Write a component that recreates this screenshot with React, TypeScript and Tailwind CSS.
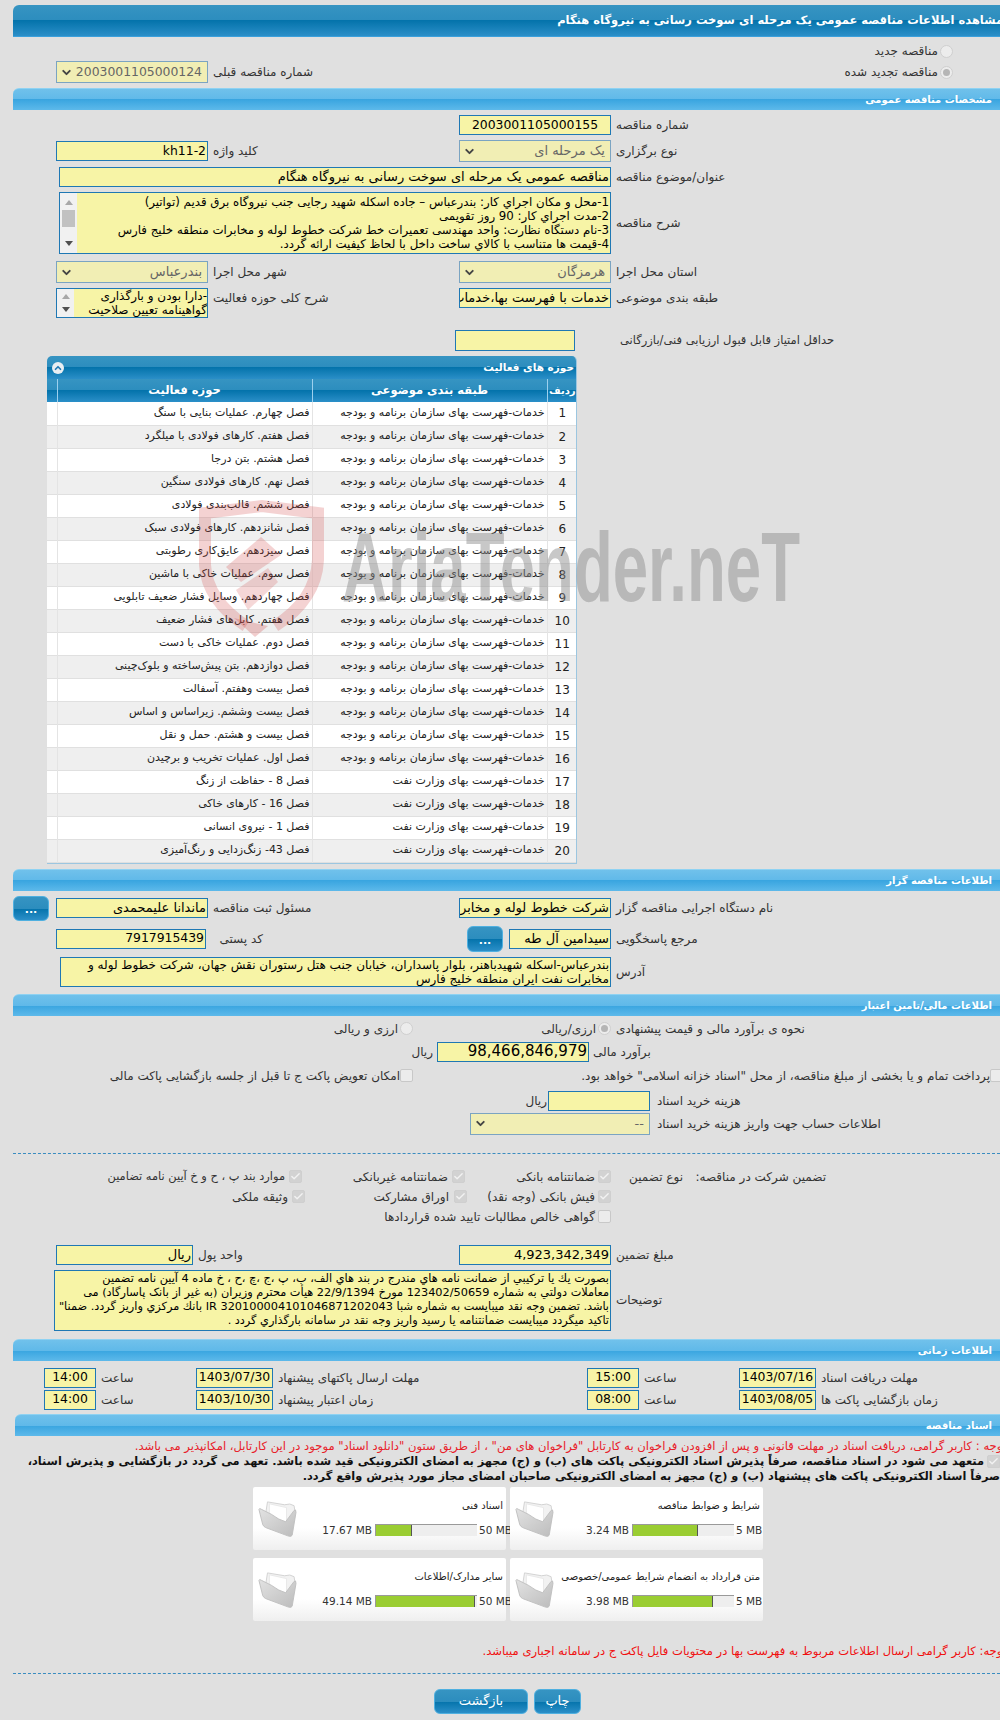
import type { ReactNode } from "react";
import { ChevronDown, ChevronUp, Check } from "lucide-react";

// Shared gradients for the blue bars
const DARK_BAR = "bg-[linear-gradient(#3694c2_0%,#2c8dbe_50%,#0473ab_50%,#2b8fc8_100%)]";
const LIGHT_BAR = "bg-[linear-gradient(#70c1eb_0%,#60b9e9_50%,#39a5e0_50%,#5db9ea_100%)]";

const CATEGORY = "خدمات-فهرست بهای سازمان برنامه و بودجه";
const CATEGORY_OIL = "خدمات-فهرست بهای وزارت نفت";

const ACTIVITIES: [string, string][] = [
  [CATEGORY, "فصل چهارم. عملیات بنایی با سنگ"],
  [CATEGORY, "فصل هفتم. کارهای فولادی با میلگرد"],
  [CATEGORY, "فصل هشتم. بتن درجا"],
  [CATEGORY, "فصل نهم. کارهای فولادی سنگین"],
  [CATEGORY, "فصل ششم. قالب‌بندی فولادی"],
  [CATEGORY, "فصل شانزدهم. کارهای فولادی سبک"],
  [CATEGORY, "فصل سیزدهم. عایق‌کاری رطوبتی"],
  [CATEGORY, "فصل سوم. عملیات خاکی با ماشین"],
  [CATEGORY, "فصل چهاردهم. وسایل فشار ضعیف تابلویی"],
  [CATEGORY, "فصل هفتم. کابل‌های فشار ضعیف"],
  [CATEGORY, "فصل دوم. عملیات خاکی با دست"],
  [CATEGORY, "فصل دوازدهم. بتن پیش‌ساخته و بلوک‌چینی"],
  [CATEGORY, "فصل بیست وهفتم. آسفالت"],
  [CATEGORY, "فصل بیست وششم. زیراساس و اساس"],
  [CATEGORY, "فصل بیست و هشتم. حمل و نقل"],
  [CATEGORY, "فصل اول. عملیات تخریب و برچیدن"],
  [CATEGORY_OIL, "فصل 8 - حفاظت از زنگ"],
  [CATEGORY_OIL, "فصل 16 - کارهای خاکی"],
  [CATEGORY_OIL, "فصل 1 - نیروی انسانی"],
  [CATEGORY_OIL, "فصل 43- زنگ‌زدایی و رنگ‌آمیزی"],
];

const DOCS = [
  [
    { title: "اسناد فنی", used: 17.67, max: 50 },
    { title: "سایر مدارک/اطلاعات", used: 49.14, max: 50 },
  ],
  [
    { title: "شرایط و ضوابط مناقصه", used: 3.24, max: 5 },
    { title: "متن قرارداد به انضمام شرایط عمومی/خصوصی", used: 3.98, max: 5 },
  ],
];

type P = { className?: string; children?: ReactNode };

// Five-column form row: margin, left field, left label, right field, right label
function Row({ className = "", children }: P) {
  return <div className={`grid grid-cols-[56px_152px_251px_152px_1fr] ${className}`}>{children}</div>;
}

function Field({ className = "", children }: P) {
  return (
    <div dir="rtl" className={`flex items-center overflow-hidden whitespace-nowrap border border-[#1f78b4] bg-[#f7f4a6] px-[1px] text-[13px] text-black ${className}`}>
      {children}
    </div>
  );
}

function Num({ children }: P) {
  return <span className="text-[12.4px]">{children}</span>;
}

function Drop({ className = "", children }: P) {
  return (
    <div dir="rtl" className={`flex items-center justify-between border border-[#7ba4c2] bg-[#f1eeb4] pl-[3px] pr-[5px] text-[13px] text-[#666] ${className}`}>
      <span>{children}</span>
      <ChevronDown size={13} strokeWidth={3.5} className="text-[#444]" />
    </div>
  );
}

function Lbl({ className = "", children }: P) {
  return (
    <div className={`flex items-center whitespace-nowrap pl-[5px] text-[12px] text-[#333] ${className}`}>
      <span dir="rtl">{children}</span>
    </div>
  );
}

function Txt({ className = "", children }: P) {
  return (
    <div dir="rtl" className={`shrink-0 whitespace-nowrap text-right text-[12px] text-[#333] ${className}`}>
      {children}
    </div>
  );
}

function Radio({ checked, className = "" }: { checked?: boolean; className?: string }) {
  return (
    <span className={`flex h-[13px] w-[13px] shrink-0 items-center justify-center rounded-full border border-[#cfcfcf] bg-[#ececec] ${className}`}>
      {checked && <span className="h-[7px] w-[7px] rounded-full bg-[#b5b5b5]" />}
    </span>
  );
}

function Box({ checked, className = "" }: { checked?: boolean; className?: string }) {
  return (
    <span className={`flex h-[13px] w-[13px] shrink-0 items-center justify-center rounded-[2px] border ${checked ? "border-[#cfcfcf] bg-[#d2d2d2]" : "border-[#c8c8c8] bg-[#ececec]"} ${className}`}>
      {checked && <Check size={11} strokeWidth={3} className="text-[#f2f2f2]" />}
    </span>
  );
}

function Section({ className = "", children }: P) {
  return (
    <div dir="rtl" className={`flex h-[22px] items-center rounded-tl-[6px] border-t border-[#8fd2f2] pr-[8px] text-[10px] font-bold text-white ${LIGHT_BAR} ${className}`}>
      {children}
    </div>
  );
}

// Scrollbar arrow of the read-only text boxes
function Tri({ up, className = "" }: { up?: boolean; className?: string }) {
  return (
    <svg viewBox="0 0 8 5" className={`h-[5px] w-[8px] ${className}`}>
      <polygon points={up ? "4,0 8,5 0,5" : "0,0 8,0 4,5"} fill={up ? "#a8a8a8" : "#505050"} />
    </svg>
  );
}

function Scroller() {
  return (
    <div className="flex w-[17px] shrink-0 flex-col items-center bg-[#f1f1f1]">
      <Tri up className="mt-[7px]" />
      <div className="mt-[5px] h-[17px] w-[13px] bg-[#c1c1c1]" />
      <Tri className="mt-[14px]" />
    </div>
  );
}

function BlueButton({ className = "", children }: P) {
  return (
    <div className={`flex items-center justify-center rounded-[6px] border border-[#4fb0e0] text-white ${DARK_BAR} ${className}`}>
      {children}
    </div>
  );
}

function Folder() {
  return (
    <svg viewBox="7 9 42 40" className="h-[38px] w-[42px] shrink-0">
      <defs>
        <linearGradient id="folderFront" x1="0" y1="0" x2="1" y2="1">
          <stop offset="0" stopColor="#e2e2e2" />
          <stop offset="1" stopColor="#bcbcbc" />
        </linearGradient>
      </defs>
      <path d="M18 11 L36 14 Q42 12 46 15 L47 22 L43 46 L15 30 Z" fill="#f2f2f2" stroke="#d2d2d2" />
      <path d="M20 13 L38 17 L38 32 L20 26 Z" fill="#ffffff" stroke="#e8e8e8" />
      <path d="M9 19 Q9 17 12 19 L22 24 Q30 30 37 32 L46 20 Q48 18 48 22 L44 46 Q43 48 40 47 L16 38 Q14 37 13 35 Z" fill="url(#folderFront)" stroke="#c0c0c0" />
    </svg>
  );
}

function DocCard({ title, used, max }: { title: string; used: number; max: number }) {
  return (
    <div className="flex h-[63px] w-[253px] rounded-[2px] bg-[linear-gradient(#ffffff_65%,#efefef_100%)]">
      <div className="ml-[3px] mt-[13px]">
        <Folder />
      </div>
      <div className="flex flex-1 flex-col pr-[3px] pt-[11px]">
        <div dir="rtl" className="h-[26px] whitespace-nowrap text-[10px] text-[#222]">{title}</div>
        <div className="flex items-center justify-end text-[10.5px] leading-[12px] text-[#333]">
          <span className="mr-[3px] whitespace-nowrap">{used} MB</span>
          <div className="h-[12px] w-[102px] border-l border-t border-[#9a9a9a] bg-[#eeeeee]">
            <div className="h-full border-r border-[#555] bg-[#9acd32]" style={{ width: `${(used / max) * 100}%` }} />
          </div>
          <span className="ml-[2px] w-[24px] whitespace-nowrap text-left">{max} MB</span>
        </div>
      </div>
    </div>
  );
}

// Site watermark lying over the page
function Watermark() {
  return (
    <svg viewBox="0 0 1000 300" className="pointer-events-none absolute left-0 top-[450px] h-[300px] w-[1000px]">
      <path d="M246 176 Q207 150 205 115 L205 63 L262 56 L318 63 L318 110 Q316 150 275 176" fill="none" stroke="#d24a4a" strokeOpacity="0.25" strokeWidth="12" />
      <polygon points="234,168 268,176 255,187" fill="#d24a4a" fillOpacity="0.28" />
      <polygon points="261,87 281,105 241,132 226,117" fill="#d24a4a" fillOpacity="0.25" />
      <polygon points="236,140 268,118 278,132 248,160" fill="#d24a4a" fillOpacity="0.22" />
      <text x="342" y="151" textLength="458" lengthAdjust="spacingAndGlyphs" fontFamily="'Liberation Sans', sans-serif" fontWeight="700" fontSize="98" fill="#8c8c8c" fillOpacity="0.48">
        AriaTender.neT
      </text>
    </svg>
  );
}

export default function App() {
  return (
    <div className="relative h-[1720px] w-[1000px] overflow-hidden bg-[#e0e0e0] font-['DejaVu_Sans','Noto_Sans',sans-serif] text-[12px]">
      {/* Page title */}
      <div dir="rtl" className={`ml-[13px] mt-[5px] flex h-[32px] items-center overflow-hidden whitespace-nowrap rounded-tl-[6px] border-b border-[#3aa0dc] text-[11.5px] font-bold text-white ${DARK_BAR}`}>
        <span className="mr-[-3px]">مشاهده اطلاعات مناقصه عمومی یک مرحله ای سوخت رسانی به نیروگاه هنگام</span>
      </div>

      {/* New / renewed */}
      <div className="flex h-[20px] items-center justify-end pr-[47px] pt-[8px]">
        <Txt className="mr-[2px]">مناقصه جدید</Txt>
        <Radio />
      </div>
      <Row className="mt-[4px] h-[22px]">
        <Drop className="col-start-2"><Num>2003001105000124</Num></Drop>
        <Lbl className="col-start-3">شماره مناقصه قبلی</Lbl>
        <div className="col-span-2 col-start-4 flex items-center justify-end pr-[47px]">
          <Txt className="mr-[2px]">مناقصه تجدید شده</Txt>
          <Radio checked />
        </div>
      </Row>

      {/* General */}
      <Section className="ml-[13px] mt-[5px]">مشخصات مناقصه عمومی</Section>
      <Row className="mt-[5px] h-[20px]">
        <Field className="col-start-4 justify-center"><Num>2003001105000155</Num></Field>
        <Lbl className="col-start-5">شماره مناقصه</Lbl>
      </Row>
      <Row className="mt-[5px] h-[22px]">
        <Field className="col-start-2 my-[1px]"><Num>kh11-2</Num></Field>
        <Lbl className="col-start-3">کلید واژه</Lbl>
        <Drop className="col-start-4">یک مرحله ای</Drop>
        <Lbl className="col-start-5">نوع برگزاری</Lbl>
      </Row>
      <div className="mt-[5px] flex h-[20px]">
        <Field className="ml-[59px] w-[552px]">مناقصه عمومی یک مرحله ای سوخت رسانی به نیروگاه هنگام</Field>
        <Lbl>عنوان/موضوع مناقصه</Lbl>
      </div>
      <div className="mt-[5px] flex h-[62px]">
        <div className="ml-[59px] flex w-[552px] overflow-hidden border border-[#1f78b4] bg-[#f7f4a6] text-[11.8px] leading-[14px] text-black">
          <Scroller />
          <div dir="rtl" className="flex-1 whitespace-nowrap pr-[1px] pt-[2px]">
            <div>1-محل و مکان اجراي کار: بندرعباس – جاده اسکله شهید رجایی جنب نیروگاه برق قدیم (تواتیر)</div>
            <div>2-مدت اجراي کار: 90 روز تقویمی</div>
            <div>3-نام دستگاه نظارت: واحد مهندسی تعمیرات خط شرکت خطوط لوله و مخابرات منطقه خلیج فارس</div>
            <div>4-قیمت ها متناسب با کالاي ساخت داخل با لحاظ کیفیت ارائه گردد.</div>
          </div>
        </div>
        <Lbl>شرح مناقصه</Lbl>
      </div>
      <Row className="mt-[7px] h-[22px]">
        <Drop className="col-start-2">بندرعباس</Drop>
        <Lbl className="col-start-3">شهر محل اجرا</Lbl>
        <Drop className="col-start-4">هرمزگان</Drop>
        <Lbl className="col-start-5">استان محل اجرا</Lbl>
      </Row>
      <Row className="mt-[5px] h-[30px]">
        <div className="col-start-2 flex overflow-hidden border border-[#1f78b4] bg-[#f7f4a6] text-[12px] leading-[14px] text-black">
          <div className="flex w-[17px] shrink-0 flex-col items-center justify-between bg-[#f1f1f1] py-[5px]">
            <Tri up />
            <Tri />
          </div>
          <div dir="rtl" className="flex-1 whitespace-nowrap">
            <div>-دارا بودن و بارگذاری</div>
            <div>گواهینامه تعیین صلاحیت</div>
          </div>
        </div>
        <Lbl className="col-start-3 h-[20px]">شرح کلی حوزه فعالیت</Lbl>
        <Field className="col-start-4 h-[20px]">خدمات با فهرست بها،خدمات با فهرست بها</Field>
        <Lbl className="col-start-5 h-[20px]">طبقه بندی موضوعی</Lbl>
      </Row>
      <div className="mt-[12px] flex h-[21px]">
        <Field className="ml-[455px] w-[120px]" />
        <Lbl className="ml-[40px]"><span className="text-[11.5px]">حداقل امتیاز قابل قبول ارزیابی فنی/بازرگانی</span></Lbl>
      </div>

      {/* Activity table */}
      <div className="ml-[47px] mt-[5px] w-[530px] overflow-hidden rounded-t-[5px] border-b border-r border-[#9cc6e0]">
        <div dir="rtl" className={`flex h-[23px] items-center justify-between pl-[5px] pr-[2px] text-[10.5px] font-bold text-white ${DARK_BAR}`}>
          <span>حوزه های فعالیت</span>
          <span className="flex h-[12px] w-[12px] items-center justify-center rounded-full bg-[#e8eef2]">
            <ChevronUp size={10} strokeWidth={4} className="text-[#1f78b4]" />
          </span>
        </div>
        <table dir="rtl" className="w-full table-fixed border-collapse">
          <colgroup>
            <col className="w-[30px]" />
            <col className="w-[235px]" />
            <col className="w-[255px]" />
            <col className="w-[10px]" />
          </colgroup>
          <thead>
            <tr className={`h-[23px] text-[11.5px] font-bold text-white ${DARK_BAR}`}>
              <th className="whitespace-nowrap border-l border-[#9cd0ee] text-[10px] font-bold">ردیف</th>
              <th className="border-l border-[#9cd0ee] font-bold">طبقه بندی موضوعی</th>
              <th className="border-l border-[#9cd0ee] font-bold">حوزه فعالیت</th>
              <th />
            </tr>
          </thead>
          <tbody>
            {ACTIVITIES.map(([category, activity], i) => (
              <tr key={i} className={`h-[23px] border-b border-[#e0e0e0] text-[11px] text-[#222] ${i % 2 ? "bg-[#efefef]" : "bg-white"}`}>
                <td className="border-l border-[#e4e4e4] text-center text-[12px]">{i + 1}</td>
                <td className="overflow-hidden whitespace-nowrap border-l border-[#e4e4e4] pr-[2px]">{category}</td>
                <td className="overflow-hidden whitespace-nowrap border-l border-[#e4e4e4] pr-[2px]">{activity}</td>
                <td />
              </tr>
            ))}
          </tbody>
        </table>
      </div>

      {/* Organizer */}
      <Section className="ml-[13px] mt-[5px]">اطلاعات مناقصه گزار</Section>
      <div className="mt-[5px] flex h-[25px] items-center">
        <BlueButton className="ml-[13px] h-[25px] w-[36px] pt-[5px] text-[11px] font-bold">...</BlueButton>
        <Field className="ml-[7px] h-[20px] w-[152px]">ماندانا علیمحمدی</Field>
        <Lbl className="w-[251px]">مسئول ثبت مناقصه</Lbl>
        <Field className="h-[20px] w-[152px]">شرکت خطوط لوله و مخابرات نفت</Field>
        <Lbl>نام دستگاه اجرایی مناقصه گزار</Lbl>
      </div>
      <div className="mt-[5px] flex h-[26px] items-center">
        <Field className="ml-[56px] h-[20px] w-[150px]"><Num>7917915439</Num></Field>
        <Txt className="w-[57px]">کد پستی</Txt>
        <BlueButton className="ml-[204px] h-[26px] w-[36px] pt-[5px] text-[11px] font-bold">...</BlueButton>
        <Field className="ml-[6px] h-[20px] w-[102px]">سیدامین آل طه</Field>
        <Lbl>مرجع پاسخگویی</Lbl>
      </div>
      <div className="mt-[5px] flex h-[30px]">
        <div dir="rtl" className="ml-[60px] w-[551px] overflow-hidden whitespace-nowrap border border-[#1f78b4] bg-[#f7f4a6] px-[1px] text-[12px] leading-[14px] text-black">
          <div>بندرعباس-اسکله شهیدباهنر، بلوار پاسداران، خیابان جنب هتل رستوران نقش جهان، شرکت خطوط لوله و</div>
          <div>مخابرات نفت ایران منطقه خلیج فارس</div>
        </div>
        <Lbl>آدرس</Lbl>
      </div>

      {/* Financial */}
      <Section className="ml-[13px] mt-[7px]">اطلاعات مالی/تامین اعتبار</Section>
      <div className="mt-[5px] flex h-[16px] items-center">
        <Txt className="w-[398px]">ارزی و ریالی</Txt>
        <Radio className="ml-[2px]" />
        <Txt className="w-[183px]">ارزی/ریالی</Txt>
        <Radio checked className="ml-[2px]" />
        <Lbl>نحوه ی برآورد مالی و قیمت پیشنهادی</Lbl>
      </div>
      <div className="mt-[5px] flex h-[20px] items-center">
        <Txt className="w-[433px]">ریال</Txt>
        <Field className="ml-[4px] h-[20px] w-[152px]"><span className="text-[15px]">98,466,846,979</span></Field>
        <Lbl className="ml-[-1px]">برآورد مالی</Lbl>
      </div>
      <div className="mt-[6px] flex h-[16px] items-center">
        <Txt className="w-[400px]">امکان تعویض پاکت ج تا قبل از جلسه بازگشایی پاکت مالی</Txt>
        <Box />
        <Txt className="w-[577px]">پرداخت تمام و یا بخشی از مبلغ مناقصه، از محل "اسناد خزانه اسلامی" خواهد بود.</Txt>
        <Box className="rounded-r-none" />
      </div>
      <div className="mt-[7px] flex h-[20px] items-center">
        <Txt className="w-[547px]">ریال</Txt>
        <Field className="ml-[1px] h-[20px] w-[102px]" />
        <Lbl className="ml-[2px]">هزینه خرید اسناد</Lbl>
      </div>
      <div className="mt-[2px] flex h-[22px]">
        <Drop className="ml-[470px] w-[180px]">--</Drop>
        <Lbl className="ml-[2px]">اطلاعات حساب جهت واریز هزینه خرید اسناد</Lbl>
      </div>
      <div className="ml-[13px] mt-[18px] border-t border-dashed border-[#3a8cc0]" />

      {/* Guarantee */}
      <div className="mt-[15px] flex h-[16px] items-center">
        <Txt className="w-[285px]"><span className="text-[11.4px]">موارد بند پ ، ح و خ آیین نامه تضامین</span></Txt>
        <Box checked className="ml-[4px]" />
        <Txt className="w-[146px]">ضمانتنامه غیربانکی</Txt>
        <Box checked className="ml-[4px]" />
        <Txt className="w-[130px]">ضمانتنامه بانکی</Txt>
        <Box checked className="ml-[3px]" />
        <Txt className="ml-[20px] w-[52px]">نوع تضمین</Txt>
        <Txt className="ml-[17px] w-[126px]">تضمین شرکت در مناقصه:</Txt>
      </div>
      <div className="mt-[4px] flex h-[16px] items-center">
        <Txt className="w-[288px]">وثیقه ملکی</Txt>
        <Box checked className="ml-[4px]" />
        <Txt className="w-[144px]">اوراق مشارکت</Txt>
        <Box checked className="ml-[5px]" />
        <Txt className="w-[128px]">فیش بانکی (وجه نقد)</Txt>
        <Box checked className="ml-[3px]" />
      </div>
      <div className="mt-[4px] flex h-[16px] items-center">
        <Txt className="w-[595px]">گواهی خالص مطالبات تایید شده قراردادها</Txt>
        <Box className="ml-[3px]" />
      </div>
      <div className="mt-[20px] flex h-[20px]">
        <Field className="ml-[56px] w-[137px]">ریال</Field>
        <Lbl className="w-[266px]">واحد پول</Lbl>
        <Field className="w-[152px]">4,923,342,349</Field>
        <Lbl>مبلغ تضمین</Lbl>
      </div>
      <div className="mt-[5px] flex h-[61px]">
        <div dir="rtl" className="ml-[54px] w-[557px] overflow-hidden whitespace-nowrap border border-[#1f78b4] bg-[#f7f4a6] px-[1px] pt-[1px] text-[11.3px] leading-[14px] text-black">
          <div>بصورت یك یا ترکیبي از ضمانت نامه هاي مندرج در بند هاي الف، ب، پ ،ج ،چ ،ح ، خ ماده 4 آیین نامه تضمین</div>
          <div>معاملات دولتي به شماره 123402/50659 مورخ 22/9/1394 هیأت محترم وزیران (به غیر از بانک پاسارگاد) می</div>
          <div>باشد. تضمین وجه نقد میبایست به شماره شبا IR 320100004101046871202043 بانك مرکزي واریز گردد. ضمنا"</div>
          <div>تاکید میگردد میبایست ضمانتنامه یا رسید واریز وجه نقد در سامانه بارگذاري گردد .</div>
        </div>
        <Lbl>توضیحات</Lbl>
      </div>

      {/* Dates */}
      <Section className="ml-[13px] mt-[8px]">اطلاعات زمانی</Section>
      <div className="mt-[7px] flex h-[20px]">
        <Field className="ml-[44px] w-[52px] justify-center"><Num>14:00</Num></Field>
        <Lbl className="w-[100px] pl-[2px]">ساعت</Lbl>
        <Field className="w-[77px] justify-center"><Num>1403/07/30</Num></Field>
        <Lbl className="w-[314px] pl-[2px]">مهلت ارسال پاکتهای پیشنهاد</Lbl>
        <Field className="w-[52px] justify-center"><Num>15:00</Num></Field>
        <Lbl className="w-[100px] pl-[3px]">ساعت</Lbl>
        <Field className="w-[77px] justify-center"><Num>1403/07/16</Num></Field>
        <Lbl className="pl-[2px]">مهلت دریافت اسناد</Lbl>
      </div>
      <div className="mt-[2px] flex h-[20px]">
        <Field className="ml-[44px] w-[52px] justify-center"><Num>14:00</Num></Field>
        <Lbl className="w-[100px] pl-[2px]">ساعت</Lbl>
        <Field className="w-[77px] justify-center"><Num>1403/10/30</Num></Field>
        <Lbl className="w-[314px] pl-[2px]">زمان اعتبار پیشنهاد</Lbl>
        <Field className="w-[52px] justify-center"><Num>08:00</Num></Field>
        <Lbl className="w-[100px] pl-[3px]">ساعت</Lbl>
        <Field className="w-[77px] justify-center"><Num>1403/08/05</Num></Field>
        <Lbl className="pl-[2px]">زمان بازگشایی پاکت ها</Lbl>
      </div>

      {/* Documents */}
      <Section className="ml-[15px] mt-[4px]">اسناد مناقصه</Section>
      <div dir="rtl" className="mr-[-6px] mt-[2px] h-[16px] whitespace-nowrap text-[11.6px] leading-[16px] text-[#e8202a]">
        توجه : کاربر گرامی، دریافت اسناد در مهلت قانونی و پس از افزودن فراخوان به کارتابل "فراخوان های من" ، از طریق ستون "دانلود اسناد" موجود در این کارتابل، امکانپذیر می باشد.
      </div>
      <div dir="rtl" className="mt-[1px] flex h-[14px] items-center whitespace-nowrap text-[11.35px] font-bold text-[#111]">
        <Box checked className="rounded-r-none" />
        <span className="mr-[3px]">متعهد می شود در اسناد مناقصه، صرفاً پذیرش اسناد الکترونیکی پاکت های (ب) و (ج) مجهز به امضای الکترونیکی قید شده باشد. تعهد می گردد در بازگشایی و پذیرش اسناد،</span>
      </div>
      <div dir="rtl" className="h-[14px] whitespace-nowrap text-[11.35px] font-bold leading-[14px] text-[#111]">
        صرفاً اسناد الکترونیکی پاکت های پیشنهاد (ب) و (ج) مجهز به امضای الکترونیکی صاحبان امضای مجاز مورد پذیرش واقع گردد.
      </div>
      <div className="ml-[253px] mt-[4px] flex gap-[4px]">
        {DOCS.map((column, c) => (
          <div key={c} className="flex flex-col gap-[8px]">
            {column.map((doc) => (
              <DocCard key={doc.title} {...doc} />
            ))}
          </div>
        ))}
      </div>
      <div dir="rtl" className="mr-[-6px] mt-[22px] whitespace-nowrap text-[11.6px] leading-[16px] text-[#f01010]">
        توجه: کاربر گرامی ارسال اطلاعات مربوط به فهرست بها در محتویات فایل پاکت ج در سامانه اجباری میباشد.
      </div>
      <div className="ml-[13px] mt-[14px] border-t border-dashed border-[#3a8cc0]" />
      <div className="mt-[15px] flex h-[25px] justify-center">
        <BlueButton className="ml-[434px] h-[25px] w-[94px] text-[13px]">بازگشت</BlueButton>
        <BlueButton className="ml-[6px] mr-auto h-[25px] w-[47px] text-[13px]">چاپ</BlueButton>
      </div>

      <Watermark />
    </div>
  );
}
